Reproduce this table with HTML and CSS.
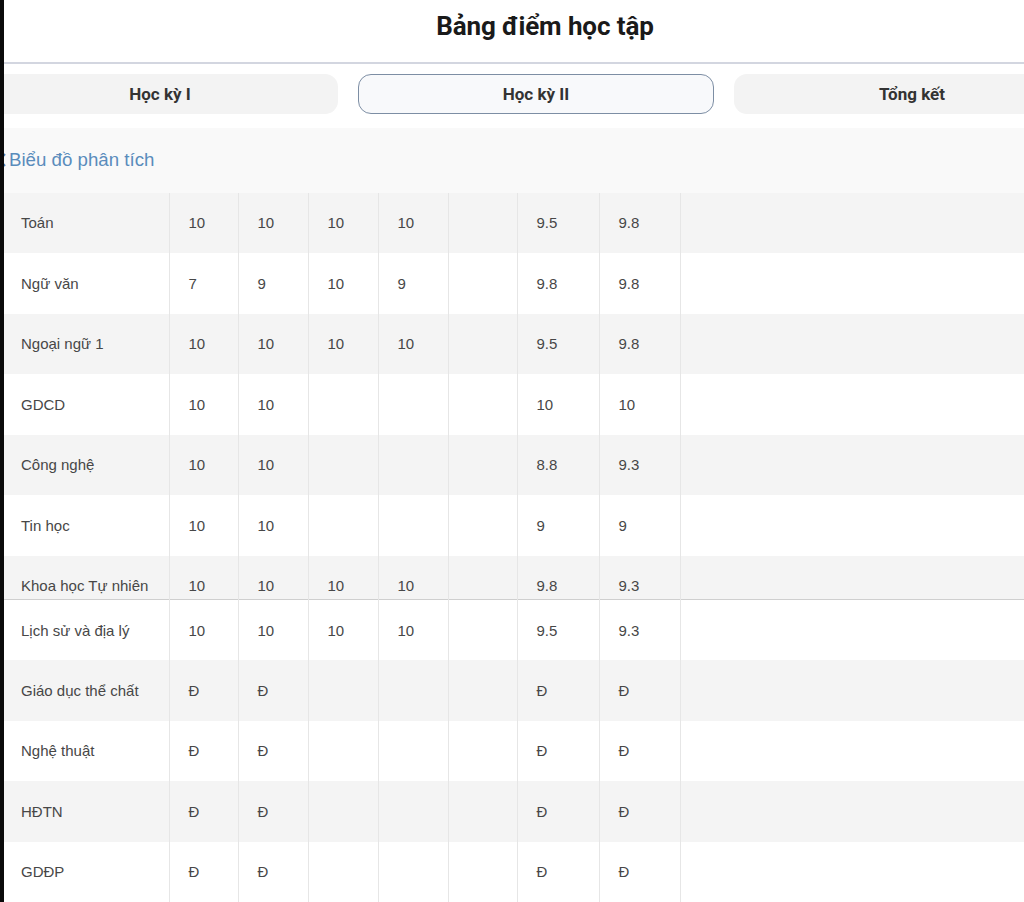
FILE: index.html
```html
<!DOCTYPE html>
<html lang="vi">
<head>
<meta charset="utf-8">
<title>Bảng điểm học tập</title>
<link rel="stylesheet" href="styles.css">
</head>
<body>
<div class="edge"></div>
<main class="screen">
  <header class="header">
    <h1 class="title">Bảng điểm học tập</h1>
  </header>
  <nav class="tabs">
    <div class="tab">Học kỳ I</div>
    <div class="tab active">Học kỳ II</div>
    <div class="tab">Tổng kết</div>
  </nav>
  <section class="panel">
    <div class="chart-link">
      <svg class="chev" width="10" height="16" viewBox="0 0 10 16"><path d="M7 2 L2 8 L7 14" fill="none" stroke="#4d82b8" stroke-width="2"/></svg>
      <span>Biểu đồ phân tích</span>
    </div>
    <table class="grades">
      <colgroup>
        <col class="c-name"><col class="c69"><col class="c70"><col class="c70"><col class="c70"><col class="c69"><col class="c82"><col class="c81"><col>
      </colgroup>
      <tbody>
        <tr class="odd"><td>Toán</td><td>10</td><td>10</td><td>10</td><td>10</td><td></td><td>9.5</td><td>9.8</td><td></td></tr>
        <tr><td>Ngữ văn</td><td>7</td><td>9</td><td>10</td><td>9</td><td></td><td>9.8</td><td>9.8</td><td></td></tr>
        <tr class="odd"><td>Ngoại ngữ 1</td><td>10</td><td>10</td><td>10</td><td>10</td><td></td><td>9.5</td><td>9.8</td><td></td></tr>
        <tr><td>GDCD</td><td>10</td><td>10</td><td></td><td></td><td></td><td>10</td><td>10</td><td></td></tr>
        <tr class="odd"><td>Công nghệ</td><td>10</td><td>10</td><td></td><td></td><td></td><td>8.8</td><td>9.3</td><td></td></tr>
        <tr><td>Tin học</td><td>10</td><td>10</td><td></td><td></td><td></td><td>9</td><td>9</td><td></td></tr>
        <tr class="odd cut"><td>Khoa học Tự nhiên</td><td>10</td><td>10</td><td>10</td><td>10</td><td></td><td>9.8</td><td>9.3</td><td></td></tr>
        <tr class="seam"><td>Lịch sử và địa lý</td><td>10</td><td>10</td><td>10</td><td>10</td><td></td><td>9.5</td><td>9.3</td><td></td></tr>
        <tr class="odd"><td>Giáo dục thể chất</td><td>Đ</td><td>Đ</td><td></td><td></td><td></td><td>Đ</td><td>Đ</td><td></td></tr>
        <tr><td>Nghệ thuật</td><td>Đ</td><td>Đ</td><td></td><td></td><td></td><td>Đ</td><td>Đ</td><td></td></tr>
        <tr class="odd"><td>HĐTN</td><td>Đ</td><td>Đ</td><td></td><td></td><td></td><td>Đ</td><td>Đ</td><td></td></tr>
        <tr><td>GDĐP</td><td>Đ</td><td>Đ</td><td></td><td></td><td></td><td>Đ</td><td>Đ</td><td></td></tr>
      </tbody>
    </table>
  </section>
</main>
</body>
</html>
```
FILE: styles.css
```css
* { box-sizing: border-box; }
html, body { margin: 0; padding: 0; }
body {
  display: flex;
  width: 1024px;
  height: 902px;
  overflow: hidden;
  background: #fff;
  font-family: "Liberation Sans", Arial, sans-serif;
  color: #444;
}
.edge {
  flex: 0 0 4px;
  background: #0a0a0a;
}
.screen {
  flex: 1 1 auto;
  min-width: 0;
  overflow: hidden;
  display: flex;
  flex-direction: column;
}
.header {
  height: 64px;
  border-bottom: 2px solid #d3d6e0;
  display: flex;
  justify-content: center;
  padding-left: 62px;
}
.title {
  margin: 0;
  padding-top: 11px;
  font-family: Roboto, "Liberation Sans", Arial, sans-serif;
  font-size: 26px;
  font-weight: 700;
  color: #1a1a1a;
  letter-spacing: -0.1px;
}
.tabs {
  display: flex;
  gap: 20px;
  margin: 10px 0 0 -22px;
  width: 1108px;
}
.tab {
  flex: 0 0 356px;
  height: 40px;
  border-radius: 13px;
  background: #f3f3f3;
  display: flex;
  align-items: center;
  justify-content: center;
  padding-top: 1px;
  font-family: Roboto, "Liberation Sans", Arial, sans-serif;
  font-weight: 700;
  font-size: 17px;
  color: #333;
}
.tab.active {
  background: #f8f9fb;
  border: 1.5px solid #7d8ea4;
}
.panel {
  margin-top: 14px;
  background: #f9f9f9;
  flex: 1 1 auto;
}
.chart-link {
  height: 65px;
  display: flex;
  align-items: center;
  gap: 1px;
  margin-left: -6px;
  padding-bottom: 1px;
  font-size: 18.7px;
  color: #5a8cbc;
}
.chev { flex: 0 0 auto; }
.grades {
  border-collapse: collapse;
  table-layout: fixed;
  width: 100%;
  font-size: 15px;
  color: #474747;
}
.c-name { width: 165px; }
.c70 { width: 70px; }
.c69 { width: 69px; }
.c82 { width: 82px; }
.c81 { width: 81px; }
.grades tr { height: 60.5px; background: #fff; }
.grades tr.odd { background: #f4f4f4; }
.grades td {
  padding: 0 0 0 19px;
  border-right: 1px solid #e6e6e6;
  white-space: nowrap;
  vertical-align: middle;
}
.grades td:first-child { padding-left: 17px; }
.grades td:last-child { border-right: none; }
.grades tr.cut { height: 44px; }
.grades tr.cut td { vertical-align: bottom; padding-bottom: 5px; }
.grades tr.seam td { border-top: 1px solid #cfcfcf; }
```
